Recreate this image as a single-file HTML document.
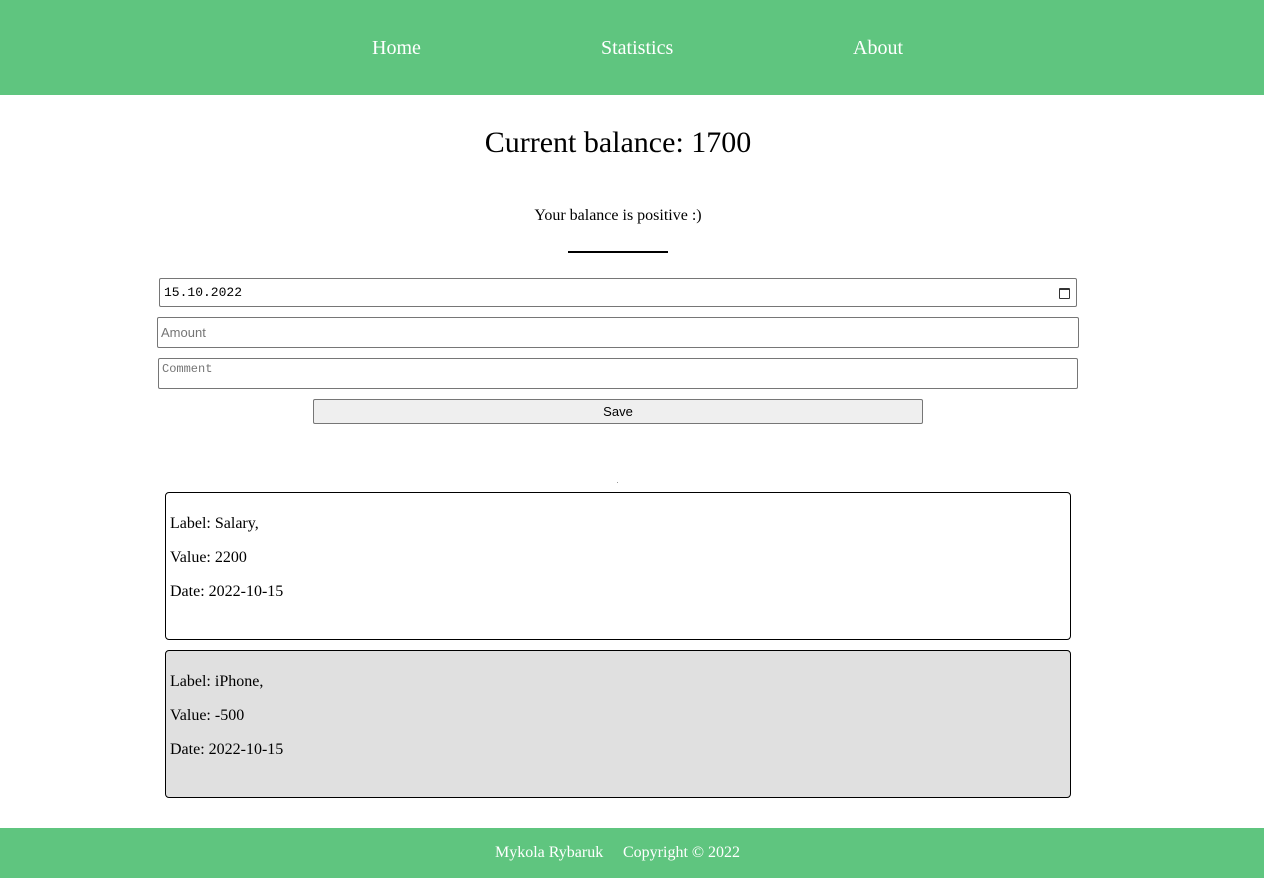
<!DOCTYPE html>
<html><head><style>
*{box-sizing:border-box;margin:0;padding:0}
body{width:1264px;height:878px;position:relative;font-family:"Liberation Serif",serif;background:#fff;overflow:hidden}
.a{position:absolute}
.box{border:1px solid #767676;border-radius:2px;background:#fff;font-size:13px;color:#757575}
.card{position:absolute;left:165px;width:906px;height:148px;border:1px solid #000;border-radius:4px;font-size:16px}
.card div{position:absolute;left:4px}
</style></head><body>
<div class="a" style="left:0;top:0;width:1264px;height:95px;background:#5fc57f"></div>
<div class="a" style="left:372px;top:37px;color:#fff;font-size:20px">Home</div>
<div class="a" style="left:601px;top:37px;color:#fff;font-size:20px">Statistics</div>
<div class="a" style="left:853px;top:37px;color:#fff;font-size:20px">About</div>
<div class="a" style="left:0;top:126px;width:1236px;text-align:center;font-size:30px">Current balance: 1700</div>
<div class="a" style="left:0;top:207px;width:1236px;text-align:center;font-size:16px">Your balance is positive :)</div>
<div class="a" style="left:568px;top:251px;width:100px;height:2px;background:#000"></div>
<div class="a box" style="left:159px;top:278px;width:918px;height:29px;padding:6px 4px;font-family:'Liberation Mono',monospace;color:#000">15.10.2022
<div class="a" style="right:6px;top:9px;width:11px;height:11px;border:1.5px solid #333;border-top-width:2.5px;border-radius:1px"></div></div>
<div class="a box" style="left:157px;top:317px;width:922px;height:31px;padding:7px 3px;font-family:'Liberation Sans',sans-serif">Amount</div>
<div class="a box" style="left:158px;top:358px;width:920px;height:31px;padding:3px 3px;font-family:'Liberation Mono',monospace;font-size:12px">Comment</div>
<div class="a" style="left:313px;top:399px;width:610px;height:25px;border:1px solid #767676;border-radius:2px;background:#efefef;text-align:center;font:13px/23px 'Liberation Sans',sans-serif;color:#000">Save</div>
<div class="a" style="left:617px;top:482px;width:1px;height:1px;background:#999"></div>
<div class="card" style="top:492px">
<div style="top:22px">Label: Salary,</div><div style="top:56px">Value: 2200</div><div style="top:90px">Date: 2022-10-15</div></div>
<div class="card" style="top:650px;background:#e0e0e0">
<div style="top:22px">Label: iPhone,</div><div style="top:56px">Value: -500</div><div style="top:90px">Date: 2022-10-15</div></div>
<div class="a" style="left:0;top:828px;width:1264px;height:50px;background:#5fc57f"></div>
<div class="a" style="left:495px;top:844px;color:#fff;font-size:16px">Mykola Rybaruk</div>
<div class="a" style="left:623px;top:844px;color:#fff;font-size:16px">Copyright © 2022</div>
</body></html>
